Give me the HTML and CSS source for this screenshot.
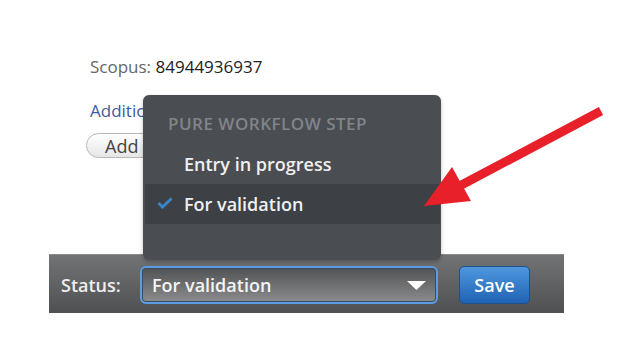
FILE: index.html
```html
<!DOCTYPE html>
<html lang="en">
<head>
  <meta charset="UTF-8">
  <title>Research output - Status</title>
  <link rel="stylesheet" href="styles.css">
</head>
<body>

<div class="page">

  <section class="record">
    <p class="identifier"><span class="id-label">Scopus:</span> 84944936937</p>
    <a class="additional" href="#links">Additional links</a>
    <button class="add-btn" type="button">Add link...</button>
  </section>

  <div class="status-bar">
    <label class="status-label" for="status">Status:</label>
    <div class="status-select" id="status">
      <span>For validation</span>
      <svg class="caret" width="19" height="9" viewBox="0 0 19 9"><path d="M0 0 H19 L9.5 9 Z" fill="#ffffff"/></svg>
    </div>
    <button class="save-btn" type="button">Save</button>
  </div>

  <!-- open dropdown of the status select -->
  <div class="workflow-menu">
    <div class="menu-heading">PURE WORKFLOW STEP</div>
    <div class="menu-item">Entry in progress</div>
    <div class="menu-item selected">
      <svg class="check" width="16" height="12" viewBox="0 0 16 12"><path d="M1.5 6 L5.5 10 L14.5 1.5" fill="none" stroke="#3b85c8" stroke-width="3"/></svg>
      For validation
    </div>
  </div>

  <!-- annotation arrow -->
  <svg class="annotation" width="631" height="349" viewBox="0 0 631 349">
    <line x1="601" y1="111" x2="452" y2="190" stroke="#e8202a" stroke-width="9"/>
    <polygon points="424,206 452,167 471,201" fill="#e8202a"/>
  </svg>

</div>

</body>
</html>
```

FILE: styles.css
```css
body {
  margin: 0;
  padding: 0;
  background: #ffffff;
  font-family: 'Open Sans', sans-serif;
  color: #333;
}
.page {
  position: relative;
  width: 631px;
  height: 349px;
  overflow: hidden;
}
.record {
  padding: 55px 0 0 90px;
}
.identifier {
  margin: 0;
  font-size: 17px;
  line-height: 24px;
  color: #222;
}
.id-label {
  color: #666;
}
.additional {
  display: block;
  margin-top: 20px;
  font-size: 17px;
  line-height: 24px;
  color: #3d5a9e;
  text-decoration: none;
}
.add-btn {
  display: block;
  margin: 10px 0 0 -4px;
  height: 25px;
  padding: 0 18px;
  border: 1px solid #b8b8b8;
  border-radius: 13px;
  background: linear-gradient(#ffffff, #e6e6e6);
  font-family: 'Open Sans', sans-serif;
  font-size: 18px;
  line-height: 22px;
  color: #444;
}
.status-bar {
  display: flex;
  align-items: center;
  margin: 96px 0 0 49px;
  width: 515px;
  height: 59px;
  padding: 2px 0 0 12px;
  box-sizing: border-box;
  background: linear-gradient(#727374, #4f5052);
  border-top: 1px solid #8a8a8a;
}
.status-label {
  width: 79px;
  font-size: 18px;
  font-weight: 600;
  color: #eeeeee;
}
.status-select {
  display: flex;
  align-items: center;
  justify-content: space-between;
  width: 298px;
  height: 38px;
  padding: 0 10px 0 10px;
  box-sizing: border-box;
  border: 2px solid #5b9ce2;
  border-radius: 6px;
  box-shadow: inset 0 0 0 1px #3a4b5e;
  background: linear-gradient(#505254, #8b8c8e);
  font-size: 18px;
  font-weight: 600;
  color: #f4f4f4;
}
.save-btn {
  margin-left: 21px;
  width: 71px;
  height: 38px;
  border: 1px solid #1c4f8c;
  border-radius: 5px;
  background: linear-gradient(#4f97df, #1f62b3);
  font-family: 'Open Sans', sans-serif;
  font-size: 18px;
  font-weight: 600;
  color: #ffffff;
}
.workflow-menu {
  position: absolute;
  left: 143px;
  top: 95px;
  width: 298px;
  height: 165px;
  padding-top: 9px;
  box-sizing: border-box;
  background: #4a4d52;
  border-radius: 6px;
  box-shadow: 0 2px 4px rgba(0,0,0,0.25);
}
.menu-heading {
  height: 40px;
  line-height: 40px;
  padding-left: 25px;
  font-size: 17px;
  font-weight: 600;
  letter-spacing: 0.5px;
  color: #80858a;
}
.menu-item {
  position: relative;
  height: 40px;
  line-height: 40px;
  margin: 0 1px 0 2px;
  padding-left: 39px;
  font-size: 18px;
  font-weight: 600;
  color: #f0f0f0;
}
.menu-item.selected {
  background: #3d4044;
}
.check {
  position: absolute;
  left: 12px;
  top: 13px;
}
.annotation {
  position: absolute;
  left: 0;
  top: 0;
  pointer-events: none;
}
```
